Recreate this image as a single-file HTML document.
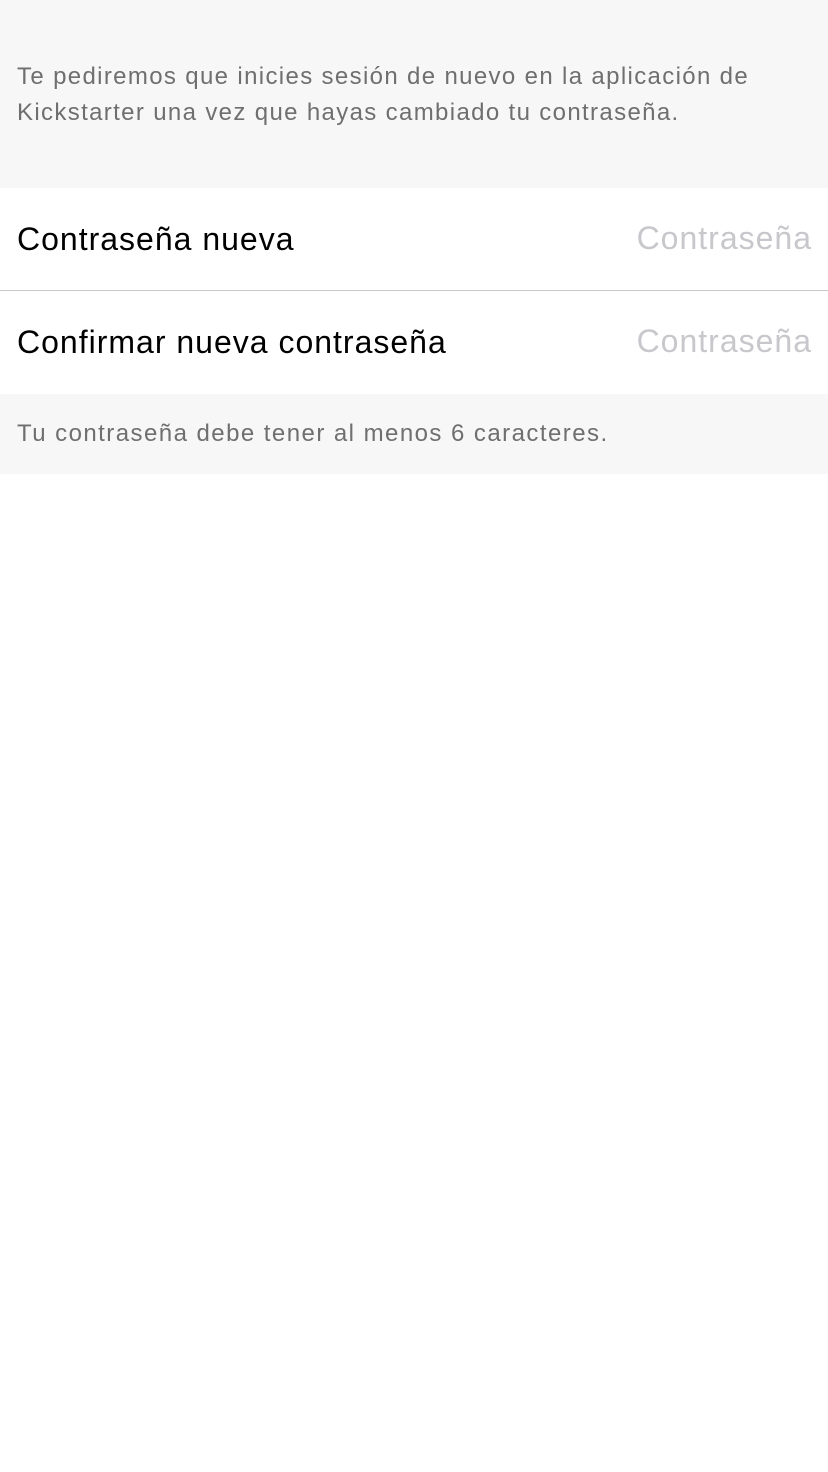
<!DOCTYPE html>
<html><head><meta charset="utf-8"><style>
body{margin:0;width:828px;height:1472px;background:#fff;font-family:"Liberation Sans",sans-serif;position:relative;overflow:hidden}
.top{position:absolute;left:0;top:0;width:828px;height:188px;background:#f7f7f7}
.top p{position:absolute;left:17px;top:59px;margin:0;font-size:24px;line-height:36px;color:#6f6f6f;letter-spacing:1.35px;white-space:nowrap}
.row{position:absolute;left:0;width:828px;height:102px;background:#fff}
.row .l{position:absolute;left:17px;top:33px;font-size:32px;color:#000;letter-spacing:1px}
.row .r{position:absolute;right:16px;top:32px;font-size:32px;color:#c7c7cc;letter-spacing:1px}
.sep{position:absolute;left:0;top:290px;width:828px;height:1px;background:#c8c8cc}
.foot{position:absolute;left:0;top:394px;width:828px;height:80px;background:#f7f7f7}
.foot p{position:absolute;left:17px;top:26px;margin:0;font-size:24px;color:#6f6f6f;letter-spacing:1.45px;white-space:nowrap}
</style></head><body>
<div class="top"><p>Te pediremos que inicies sesión de nuevo en la aplicación de<br>Kickstarter una vez que hayas cambiado tu contraseña.</p></div>
<div class="row" style="top:188px"><span class="l">Contraseña nueva</span><span class="r">Contraseña</span></div>
<div class="sep"></div>
<div class="row" style="top:291px"><span class="l">Confirmar nueva contraseña</span><span class="r">Contraseña</span></div>
<div class="foot"><p>Tu contraseña debe tener al menos 6 caracteres.</p></div>
</body></html>
